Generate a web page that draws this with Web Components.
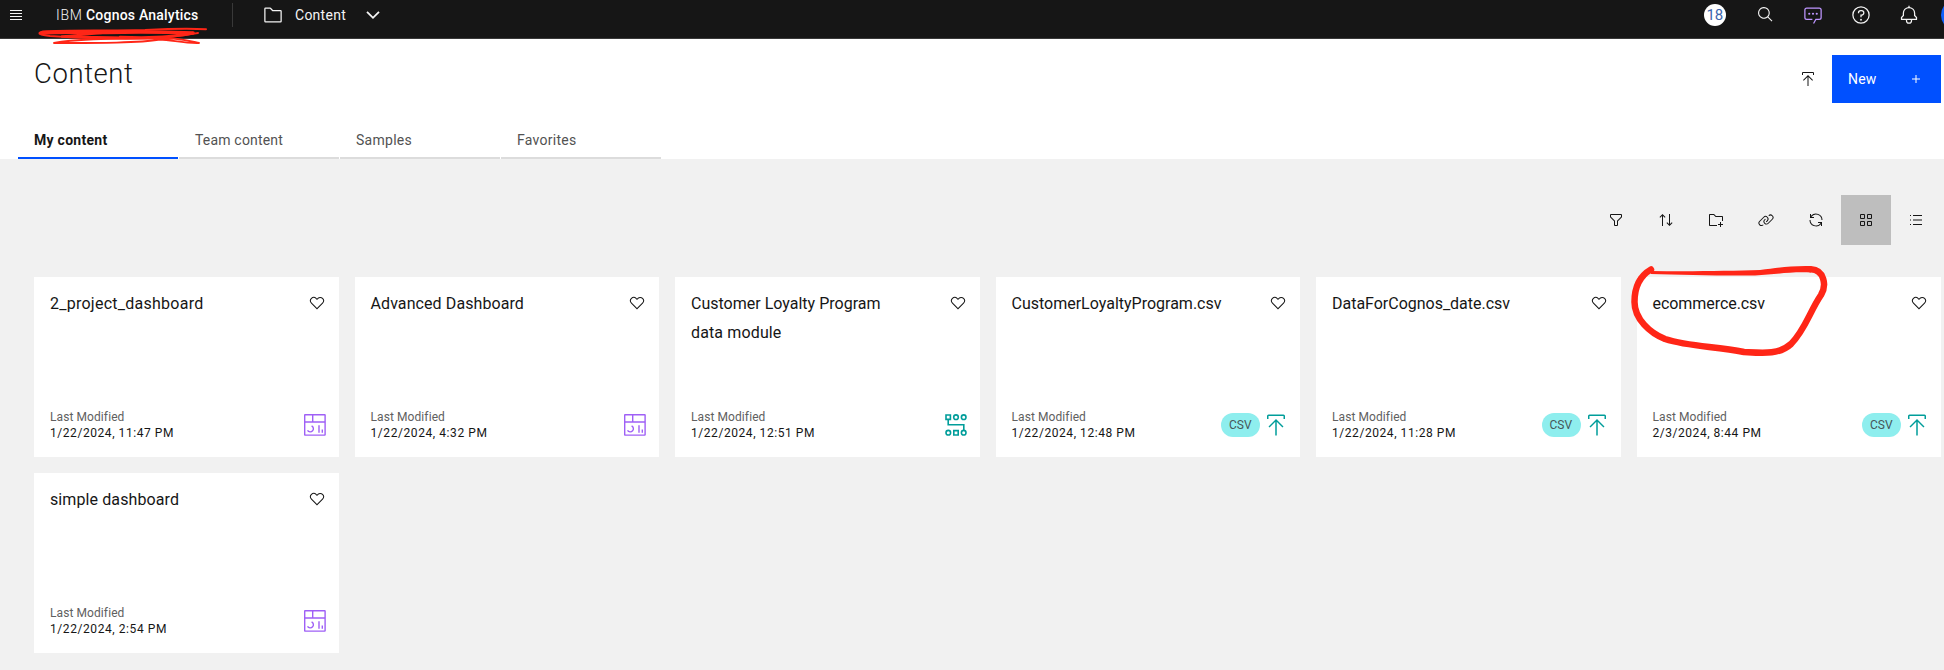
<!DOCTYPE html>
<html lang="en">
<head>
<meta charset="utf-8">
<title>IBM Cognos Analytics</title>
<style>
body{margin:0;background:#f1f1f1;font-family:Roboto,"Liberation Sans",sans-serif;color:#161616}
</style>
</head>
<body>
<ca-app></ca-app>
<script>
const define=(name,html,setup)=>customElements.define(name,class extends HTMLElement{
  connectedCallback(){
    if(this.shadowRoot)return;
    this.attachShadow({mode:'open'}).innerHTML=typeof html==='function'?html(this):html;
    if(setup)setup(this);
  }
});

/* Text run with letter spacing set so that it fills a given width. */
define('ca-text','<style>:host{display:inline-block;white-space:nowrap}</style><span><slot></slot></span>',el=>{
  const w=parseFloat(el.getAttribute('w'));
  if(!w)return;
  const natural=el.shadowRoot.querySelector('span').getBoundingClientRect().width;
  el.style.letterSpacing=((w+.5-natural)/el.textContent.length).toFixed(3)+'px';
  el.style.width=w+1+'px';
});

const icons={
  menu:[16,'<path fill="currentColor" d="M2 3h12v1H2zM2 6h12v1H2zM2 9h12v1H2zM2 12h12v1H2z"/>'],
  folder:[32,'<path fill="currentColor" d="M11.17 6l3.42 3.41.58.59H28v16H4V6h7.17m0-2H4a2 2 0 0 0-2 2v20a2 2 0 0 0 2 2h24a2 2 0 0 0 2-2V10a2 2 0 0 0-2-2H16l-3.41-3.41A2 2 0 0 0 11.17 4z"/>'],
  chevron:[16,'<path fill="none" stroke="currentColor" stroke-width="1.8" d="M2 4.8l6 6 6-6"/>'],
  search:[32,'<path fill="currentColor" d="M29 27.586l-7.552-7.552a11.018 11.018 0 1 0-1.414 1.414L27.586 29zM4 13a9 9 0 1 1 9 9 9.01 9.01 0 0 1-9-9z"/>'],
  chat:[32,'<path fill="currentColor" d="M17.74 30L16 29l4-7h6a2 2 0 0 0 2-2V8a2 2 0 0 0-2-2H6a2 2 0 0 0-2 2v12a2 2 0 0 0 2 2h9v2H6a4 4 0 0 1-4-4V8a4 4 0 0 1 4-4h20a4 4 0 0 1 4 4v12a4 4 0 0 1-4 4h-4.84z"/><circle cx="10" cy="14" r="1.7" fill="currentColor"/><circle cx="16" cy="14" r="1.7" fill="currentColor"/><circle cx="22" cy="14" r="1.7" fill="currentColor"/>'],
  help:[32,'<path fill="currentColor" d="M16 2a14 14 0 1 0 14 14A14 14 0 0 0 16 2zm0 26a12 12 0 1 1 12-12 12 12 0 0 1-12 12z"/><circle cx="16" cy="23.5" r="1.5" fill="currentColor"/><path fill="currentColor" d="M17 8h-1.500a4.490 4.490 0 0 0-4.500 4.500v.5h2v-.5a2.500 2.500 0 0 1 2.500-2.500H17a2.500 2.500 0 0 1 0 5h-2v4.500h2V17a4.500 4.500 0 0 0 0-9z"/>'],
  bell:[32,'<path fill="currentColor" d="M28.707 19.293L26 16.586V13a10.014 10.014 0 0 0-9-9.950V1h-2v2.050A10.014 10.014 0 0 0 6 13v3.586l-2.707 2.707A1 1 0 0 0 3 20v3a1 1 0 0 0 1 1h7v1a5 5 0 0 0 10 0v-1h7a1 1 0 0 0 1-1v-3a1 1 0 0 0-.293-.707zM19 25a3 3 0 0 1-6 0v-1h6zm8-3H5v-1.586l2.707-2.707A1 1 0 0 0 8 17v-4a8 8 0 0 1 16 0v4a1 1 0 0 0 .293.707L27 20.414z"/>'],
  upload:[32,'<path fill="currentColor" d="M6 18l1.410 1.410L15 11.830V30h2V11.830l7.590 7.580L26 18 16 8zM6 8V4h20v4h2V4a2 2 0 0 0-2-2H6a2 2 0 0 0-2 2v4z"/>'],
  plus:[32,'<path fill="currentColor" d="M17 15V8h-2v7H8v2h7v7h2v-7h7v-2z"/>'],
  filter:[32,'<path fill="currentColor" d="M18 28h-4a2 2 0 0 1-2-2v-7.590L4.590 11A2 2 0 0 1 4 9.590V6a2 2 0 0 1 2-2h20a2 2 0 0 1 2 2v3.590a2 2 0 0 1-.590 1.410L20 18.410V26a2 2 0 0 1-2 2zM6 6v3.590l8 8V26h4v-8.410l8-8V6z"/>'],
  sort:[32,'<path fill="currentColor" d="M27.600 20.600L24 24.200V4h-2v20.200l-3.600-3.600L17 22l6 6 6-6zM9 4l-6 6 1.400 1.400L8 7.800V28h2V7.800l3.600 3.600L15 10z"/>'],
  folderadd:[32,'<path fill="currentColor" d="M26 20h-2v4h-4v2h4v4h2v-4h4v-2h-4z"/><path fill="currentColor" d="M28 8H16l-3.400-3.400c-.4-.4-.9-.6-1.400-.6H4c-1.100 0-2 .9-2 2v20c0 1.100.9 2 2 2h14v-2H4V6h7.200l4 4H28v8h2v-8c0-1.100-.9-2-2-2z"/>'],
  link:[32,'<path fill="currentColor" d="M29.250 6.760a6 6 0 0 0-8.500 0l1.420 1.420a4 4 0 1 1 5.670 5.670l-8 8a4 4 0 1 1-5.670-5.660l1.410-1.420-1.410-1.420-1.420 1.420a6 6 0 0 0 0 8.500A6 6 0 0 0 17 25a6 6 0 0 0 4.270-1.760l8-8a6 6 0 0 0-.020-8.480z"/><path fill="currentColor" d="M4.190 24.820a4 4 0 0 1 0-5.670l8-8a4 4 0 0 1 5.670 0A3.940 3.940 0 0 1 19 14a4 4 0 0 1-1.170 2.850L15.710 19l1.420 1.420 2.120-2.120a6 6 0 0 0-8.510-8.510l-8 8a6 6 0 0 0 0 8.510A6 6 0 0 0 7 28a6.070 6.070 0 0 0 4.280-1.760l-1.420-1.420a4 4 0 0 1-5.670 0z"/>'],
  refresh:[32,'<path fill="currentColor" d="M12 10H6.780A11 11 0 0 1 27 16h2A13 13 0 0 0 6 7.680V4H4v8h8zM20 22h5.220A11 11 0 0 1 5 16H3a13 13 0 0 0 23 8.320V28h2v-8h-8z"/>'],
  grid:[32,'<path fill="currentColor" d="M12 4H6a2 2 0 0 0-2 2v6a2 2 0 0 0 2 2h6a2 2 0 0 0 2-2V6a2 2 0 0 0-2-2zm0 8H6V6h6zM26 4h-6a2 2 0 0 0-2 2v6a2 2 0 0 0 2 2h6a2 2 0 0 0 2-2V6a2 2 0 0 0-2-2zm0 8h-6V6h6zM12 18H6a2 2 0 0 0-2 2v6a2 2 0 0 0 2 2h6a2 2 0 0 0 2-2v-6a2 2 0 0 0-2-2zm0 8H6v-6h6zM26 18h-6a2 2 0 0 0-2 2v6a2 2 0 0 0 2 2h6a2 2 0 0 0 2-2v-6a2 2 0 0 0-2-2zm0 8h-6v-6h6z"/>'],
  list:[32,'<path fill="currentColor" d="M10 6h18v2H10zM10 24h18v2H10zM10 15h18v2H10zM4 15h2v2H4zM4 6h2v2H4zM4 24h2v2H4z"/>'],
  heart:[32,'<path fill="currentColor" d="M22.450 6a5.470 5.470 0 0 1 3.910 1.640 5.700 5.700 0 0 1 0 8L16 26.130 5.640 15.640a5.700 5.700 0 0 1 0-8 5.480 5.480 0 0 1 7.820 0L16 10.240l2.530-2.580A5.440 5.440 0 0 1 22.450 6m0-2a7.470 7.470 0 0 0-5.340 2.240L16 7.360l-1.110-1.120a7.490 7.490 0 0 0-10.680 0 7.720 7.720 0 0 0 0 10.820L16 29l11.790-11.940a7.720 7.720 0 0 0 0-10.820A7.490 7.490 0 0 0 22.450 4z"/>'],
  dashboard:[24,'<g fill="none" stroke="currentColor" stroke-width="1.400"><rect x="1.700" y="1.700" width="20.400" height="20.400" rx=".4"/><path d="M1.700 9h20.400M9.700 1.700V9M16 12.300v7.400M19.300 16.400v3.300M8.600 12.800a3.200 3.200 0 1 1-4.100 4.600"/></g>'],
  module:[24,'<g fill="none" stroke="currentColor" stroke-width="1.600"><path d="M2 2h4.400v4.400H2zM9.800 17.600h4.400V22H9.800zM4.200 6.400v5.400h15.600v5.500"/><circle cx="12" cy="4.200" r="2.300"/><circle cx="19.700" cy="4.200" r="2.300"/><circle cx="4.300" cy="19.700" r="2.300"/><circle cx="19.700" cy="19.700" r="2.300"/></g>']
};
define('ca-icon',el=>{
  const [box,art]=icons[el.getAttribute('name')],s=el.getAttribute('size')||16;
  return `<style>:host{display:inline-flex;flex:none}svg{display:block}</style><svg width="${s}" height="${s}" viewBox="0 0 ${box} ${box}">${art}</svg>`;
});

define('ca-header',`<style>
:host{display:flex;box-sizing:border-box;height:39px;padding-bottom:9px;background:#161616;border-bottom:1px solid #393939;color:#f4f4f4;align-items:center;font-size:14px;overflow:hidden;position:relative}
.brand{margin-left:32px;display:flex;gap:3px;font-weight:350}
b{font-weight:500;color:#fff}
.line{width:1px;height:24px;margin-left:33px;background:#393939}
.folder{margin-left:30px}
.label{margin-left:12px}
.chev{margin-left:18px}
.right{margin-left:auto;display:flex;align-items:center;flex:none}
.count{width:22px;height:22px;border-radius:50%;background:#fff;color:#3c66ae;display:flex;align-items:center;justify-content:center;font-size:15px}
.cell{width:48px;display:flex;justify-content:center}
.avatar{width:32px;height:32px;border-radius:50%;background:#0f62fe;margin-right:-29px;flex:none}
</style>
<ca-icon name="menu" style="margin-left:8px"></ca-icon>
<div class="brand"><ca-text w="26">IBM</ca-text><b><ca-text w="112">Cognos Analytics</ca-text></b></div>
<span class="line"></span>
<ca-icon class="folder" name="folder" size="20"></ca-icon>
<ca-text class="label" w="50.500">Content</ca-text>
<ca-icon class="chev" name="chevron"></ca-icon>
<div class="right"><span class="count"><ca-text w="16">18</ca-text></span>
<span class="cell" style="margin-left:15px"><ca-icon name="search" size="17"></ca-icon></span>
<span class="cell" style="color:#be95ff"><ca-icon name="chat" size="20"></ca-icon></span>
<span class="cell"><ca-icon name="help" size="20"></ca-icon></span>
<span class="cell"><ca-icon name="bell" size="20"></ca-icon></span>
<span class="avatar" style="margin-left:8px"></span></div>`);

define('ca-tab',el=>`<style>
:host{display:flex;box-sizing:border-box;width:160px;height:38px;padding:9px 0 0 16px;border-bottom:2px solid #dcdcdc;font-size:14px;color:#525252;line-height:20px}
:host([selected]){border-color:#0050ff;color:#161616;font-weight:700}
</style><ca-text w="${el.getAttribute('w')}">${el.getAttribute('label')}</ca-text>`);

define('ca-title',`<style>
:host{display:flex;flex-direction:column;box-sizing:border-box;height:120px;background:#fff}
.top{display:flex;height:82px;box-sizing:border-box;padding:16px 3px 0 34px;align-items:flex-start}
h1{margin:1px 0 0;font-size:27.500px;line-height:36px;font-weight:350}
.up{margin:16px 16px 0 auto}
button{all:unset;box-sizing:border-box;width:109px;height:48px;background:#0050ff;color:#fff;font-size:14px;display:flex;align-items:center;justify-content:space-between;padding:0 17px 0 16px}
.tabs{display:flex;gap:1px;padding-left:18px}
</style>
<div class="top"><h1><ca-text w="99">Content</ca-text></h1><ca-icon class="up" name="upload"></ca-icon><button><ca-text w="28">New</ca-text><ca-icon name="plus"></ca-icon></button></div>
<div class="tabs"><ca-tab selected w="73" label="My content"></ca-tab><ca-tab w="87.500" label="Team content"></ca-tab><ca-tab w="55.500" label="Samples"></ca-tab><ca-tab w="59" label="Favorites"></ca-tab></div>`);

define('ca-toolbar',`<style>
:host{display:flex;justify-content:flex-end;padding:36px 3px 0 0}
span{width:50px;height:50px;display:flex;align-items:center;justify-content:center}
.on{background:#bebebe}
</style>`+['filter','sort','folderadd','link','refresh','grid','list'].map(n=>`<span class="${n==='grid'?'on':''}"><ca-icon name="${n}"></ca-icon></span>`).join(''));

define('ca-card',el=>{
  const a=n=>el.getAttribute(n);
  const widths=a('widths').split(',');
  const lines=a('lines').split('|').map((t,i)=>`<ca-text w="${widths[i]}">${t}</ca-text>`).join('<br>');
  const csv=a('kind')==='upload';
  return `<style>
:host{display:flex;flex-direction:column;justify-content:space-between;box-sizing:border-box;height:180px;background:#fff;padding:12px 12px 16px 16px}
.row{display:flex;justify-content:space-between}
.name{font-size:16px;line-height:29px}
.heart{margin:6px 2px 0 0}
.row.foot{align-items:center}
.meta{font-size:12px;line-height:16px;display:flex;flex-direction:column;color:#161616}
.meta :first-child{color:#606060}
.type{display:flex;align-items:center;gap:4px;color:#9f60f6}
.pill{width:39px;height:24px;border-radius:12px;background:#8eeeee;color:#47575a;font-size:12px;display:flex;align-items:center;justify-content:center}
.teal{color:#009d9a}
</style>
<div class="row"><div class="name">${lines}</div><ca-icon class="heart" name="heart"></ca-icon></div>
<div class="row foot"><div class="meta"><ca-text w="73.5">Last Modified</ca-text><ca-text w="${a('dw')}">${a('date')}</ca-text></div>
<div class="type ${a('kind')==='dashboard'?'':'teal'}">${csv?'<span class="pill"><ca-text w="22">CSV</ca-text></span>':''}<ca-icon name="${a('kind')}" size="24"></ca-icon></div></div>`;
});

/* Freehand red pen marks over the page. */
define('ca-ink',`<style>:host{position:absolute;left:0;top:0;width:1944px;height:670px;pointer-events:none}svg{display:block}</style>
<svg width="1944" height="670" viewBox="0 0 1944 670" fill="none" stroke="#ff2617" stroke-linecap="round" stroke-linejoin="round">
<path stroke-width="2" d="M206 29.300C185 28 165 29 145 30C105 31 65 30 43 31.500C36 33 40 35 50 36C90 38.500 135 39.500 165 37.500C185 35 192 34 198 33"/>
<path stroke-width="3.600" d="M42 33C62 31.500 85 32.500 106 32.500C140 31.500 165 32 193 33"/>
<path stroke-width="2.400" d="M193 33C175 39 110 38 62 36.500C85 35 98 33 110 32M120 37C150 38 175 37 186 33"/>
<path stroke-width="1.800" d="M54 43C75 39 120 38 160 38C180 38 190 41 199 43C185 43.500 172 40 160 39.500C140 43 100 43 54 43"/>
<path stroke-width="6.500" d="M1651 269.500C1638 277 1634.500 291 1634.500 302C1634.500 319 1650 333 1665 339C1690 347 1715 346 1744 352C1762 353 1779 355 1791 344C1805 330 1810 311 1821 295C1827 285 1824 270 1811 269.300"/>
<path fill="#ff2617" stroke="none" d="M1651 271C1690 271.500 1730 271 1760 270C1778 268 1790 265.500 1811 266V272.500C1790 271.500 1775 274.500 1755 275.500C1720 276 1680 274.500 1651 274Z"/>
</svg>`);

define('ca-app',`<style>
:host{display:block;height:670px;overflow:hidden;position:relative;background:#f1f1f1}
main{display:grid;grid-template-columns:repeat(6,minmax(0,1fr));gap:16px;padding:32px 3px 17px 34px}
</style>
<ca-header></ca-header><ca-title></ca-title><ca-toolbar></ca-toolbar>
<main>
<ca-card lines="2_project_dashboard" widths="153" date="1/22/2024, 11:47 PM" dw="123.500" kind="dashboard"></ca-card>
<ca-card lines="Advanced Dashboard" widths="153" date="1/22/2024, 4:32 PM" dw="116.500" kind="dashboard"></ca-card>
<ca-card lines="Customer Loyalty Program|data module" widths="189,90" date="1/22/2024, 12:51 PM" dw="123.500" kind="module"></ca-card>
<ca-card lines="CustomerLoyaltyProgram.csv" widths="209.500" date="1/22/2024, 12:48 PM" dw="123.500" kind="upload"></ca-card>
<ca-card lines="DataForCognos_date.csv" widths="177.500" date="1/22/2024, 11:28 PM" dw="123.500" kind="upload"></ca-card>
<ca-card lines="ecommerce.csv" widths="112" date="2/3/2024, 8:44 PM" dw="108.500" kind="upload"></ca-card>
<ca-card lines="simple dashboard" widths="128.500" date="1/22/2024, 2:54 PM" dw="116.500" kind="dashboard"></ca-card>
</main>
<ca-ink></ca-ink>`);
</script>
</body>
</html>
